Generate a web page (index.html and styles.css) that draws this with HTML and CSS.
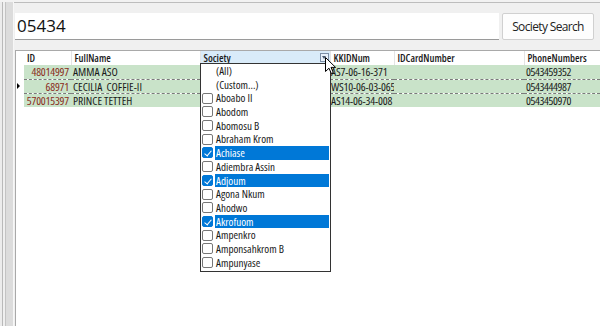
FILE: index.html
```html
<!DOCTYPE html>
<html lang="en">
<head>
	<meta charset="UTF-8">
	<title>Society Search</title>
	<link rel="stylesheet" href="styles.css">
</head>
<body>
	<div class="window">
		<div class="frame-edge"></div>
		<div class="main">
			<div class="search-row">
				<div class="search-box">05434</div>
				<button class="search-btn">Society Search</button>
			</div>
			<div class="grid">
				<table class="data">
					<colgroup>
						<col class="c-rowhead">
						<col class="c-id">
						<col class="c-name">
						<col class="c-society">
						<col class="c-kkid">
						<col class="c-card">
						<col class="c-phone">
					</colgroup>
					<tr class="head">
						<th class="rowhead"></th>
						<th>ID</th>
						<th>FullName</th>
						<th class="active">Society<span class="filter-icon"></span></th>
						<th>KKIDNum</th>
						<th>IDCardNumber</th>
						<th>PhoneNumbers</th>
					</tr>
					<tr class="row">
						<td class="rowhead"></td>
						<td class="id">48014997</td>
						<td>AMMA ASO</td>
						<td></td>
						<td class="kkid">AS7-06-16-371</td>
						<td></td>
						<td class="phone">0543459352</td>
					</tr>
					<tr class="row current">
						<td class="rowhead"><span class="marker"></span></td>
						<td class="id">68971</td>
						<td>CECILIA&nbsp; COFFIE-II</td>
						<td></td>
						<td class="kkid">WS10-06-03-065</td>
						<td></td>
						<td class="phone">0543444987</td>
					</tr>
					<tr class="row">
						<td class="rowhead"></td>
						<td class="id">570015397</td>
						<td>PRINCE TETTEH</td>
						<td></td>
						<td class="kkid">AS14-06-34-008</td>
						<td></td>
						<td class="phone">0543450970</td>
					</tr>
				</table>

				<ul class="filter-popup">
					<li class="plain">(All)</li>
					<li class="plain">(Custom...)</li>
					<li><span class="box"></span><span class="label">Aboabo II</span></li>
					<li><span class="box"></span><span class="label">Abodom</span></li>
					<li><span class="box"></span><span class="label">Abomosu B</span></li>
					<li><span class="box"></span><span class="label">Abraham Krom</span></li>
					<li class="checked"><span class="box"></span><span class="label">Achiase</span></li>
					<li><span class="box"></span><span class="label">Adiembra Assin</span></li>
					<li class="checked"><span class="box"></span><span class="label">Adjoum</span></li>
					<li><span class="box"></span><span class="label">Agona Nkum</span></li>
					<li><span class="box"></span><span class="label">Ahodwo</span></li>
					<li class="checked"><span class="box"></span><span class="label">Akrofuom</span></li>
					<li><span class="box"></span><span class="label">Ampenkro</span></li>
					<li><span class="box"></span><span class="label">Amponsahkrom B</span></li>
					<li><span class="box"></span><span class="label">Ampunyase</span></li>
				</ul>

				<svg class="cursor" width="12" height="18" viewBox="0 0 12 18">
					<path d="M0.5 0.5 L0.5 14.5 L4 11.2 L6.3 16.5 L8.3 15.6 L6 10.4 L10.6 10.4 Z" fill="#fff" stroke="#000" stroke-width="1" stroke-linejoin="round"/>
				</svg>
			</div>
		</div>
	</div>
</body>
</html>
```

FILE: styles.css
```css
* {
	box-sizing: border-box;
}
body {
	margin: 0;
	background: #fff;
	font-family: "Open Sans", "Noto Sans", sans-serif;
	color: #1a1a1a;
}
.window {
	display: flex;
	height: 326px;
	border-top: 2px solid #f2f2f2;
	overflow: hidden;
}
.frame-edge {
	width: 14px;
	flex: none;
	background: linear-gradient(to right, #ececec 0 2px, #b9b9b9 2px 3px, #efefef 3px 5px, #c3c3c3 5px 6px, #dcdcdc 6px 13px, #f7f7f7 13px 14px);
}
.main {
	flex: 1;
	min-width: 0;
	display: flex;
	flex-direction: column;
	background: #f0f0f0;
	border-top: 1px solid #bdbdbd;
}
.search-row {
	display: flex;
	align-items: stretch;
	gap: 3px;
	height: 27px;
	margin-top: 10px;
	padding-left: 1px;
	padding-right: 6px;
}
.search-box {
	flex: 1;
	min-width: 0;
	background: #fff;
	border-bottom: 1px solid #9a9a9a;
	padding-left: 2px;
	font-size: 17px;
	line-height: 26px;
	color: #111;
}
.search-btn {
	flex: none;
	width: 92px;
	background: #fdfdfd;
	border: 1px solid #d0d0d0;
	border-radius: 2px;
	font-family: inherit;
	font-size: 12px;
	letter-spacing: -0.65px;
	color: #222;
	padding: 0;
}
.grid {
	position: relative;
	flex: 1;
	margin-top: 10px;
	margin-left: 1px;
	background: #fff;
	border-top: 1px solid #a9a9a9;
	border-left: 1px solid #a9a9a9;
	overflow: hidden;
}
.data {
	border-collapse: collapse;
	table-layout: fixed;
	width: 100%;
	font-size: 11.5px;
	font-stretch: 75%;
}
.c-rowhead { width: 8px; }
.c-id { width: 47px; }
.c-name { width: 129px; }
.c-society { width: 130px; }
.c-kkid { width: 64px; }
.c-card { width: 130px; }
.c-phone { width: 76px; }

.data th,
.data td {
	height: 14px;
	padding: 0 2px;
	white-space: nowrap;
	overflow: hidden;
	line-height: 13px;
}
.head th {
	text-align: left;
	font-size: 10.4px;
	font-weight: 600;
	background: #fff;
	border-right: 1px solid #e4e4e4;
	padding-left: 3px;
	position: relative;
}
.head th.active {
	background: #d9ebf9;
}
.filter-icon {
	position: absolute;
	right: 1px;
	top: 2px;
	width: 9px;
	height: 9px;
	border: 1px solid #7c8fa6;
	background: #e8f1fb;
}
.filter-icon::after {
	content: "";
	position: absolute;
	left: 1px;
	top: 2px;
	border-left: 2.5px solid transparent;
	border-right: 2.5px solid transparent;
	border-top: 3px solid #4a5a6e;
}
.row td {
	background: #c9e3c9;
	height: 14px;
}
.row td.rowhead,
.head th.rowhead {
	background: #fff;
	border-right: none;
	padding: 0;
}
.row td.id {
	text-align: right;
	color: #8a2c20;
	letter-spacing: -0.2px;
}
.row td.kkid {
	padding-left: 1px;
	padding-right: 0;
	letter-spacing: -0.15px;
}
.row td.phone {
	letter-spacing: -0.4px;
}
.row.current td {
	border-top: 1px dashed #7a7a7a;
	border-bottom: 1px dashed #7a7a7a;
}
.row.current td.rowhead {
	border: none;
	position: relative;
}
.marker {
	position: absolute;
	left: 1px;
	top: 4px;
	border-top: 3px solid transparent;
	border-bottom: 3px solid transparent;
	border-left: 3px solid #000;
}

.filter-popup {
	position: absolute;
	left: 184px;
	top: 12px;
	width: 131px;
	margin: 0;
	padding: 0 0 2px;
	list-style: none;
	background: #fff;
	border: 1px solid #333;
	font-size: 11.1px;
	font-stretch: 75%;
}
.filter-popup li {
	display: flex;
	align-items: center;
	height: 13.7px;
	line-height: 13.7px;
	padding-left: 1px;
	padding-right: 1px;
}
.filter-popup li.plain {
	padding-left: 15px;
}
.box {
	flex: none;
	width: 11px;
	height: 11px;
	border: 1px solid #777;
	border-radius: 2px;
	background: #fff;
	margin-right: 2px;
	position: relative;
}
.label {
	flex: 1;
	height: 13.7px;
	padding-left: 1px;
}
.checked .label {
	background: #0078d7;
	color: #fff;
}
.checked .box {
	background: #0078d7;
	border-color: #0078d7;
}
.checked .box::after {
	content: "";
	position: absolute;
	left: 3px;
	top: 1px;
	width: 3px;
	height: 6px;
	border-right: 1px solid #fff;
	border-bottom: 1px solid #fff;
	transform: rotate(40deg);
}
.cursor {
	position: absolute;
	left: 309px;
	top: 6px;
}
```
